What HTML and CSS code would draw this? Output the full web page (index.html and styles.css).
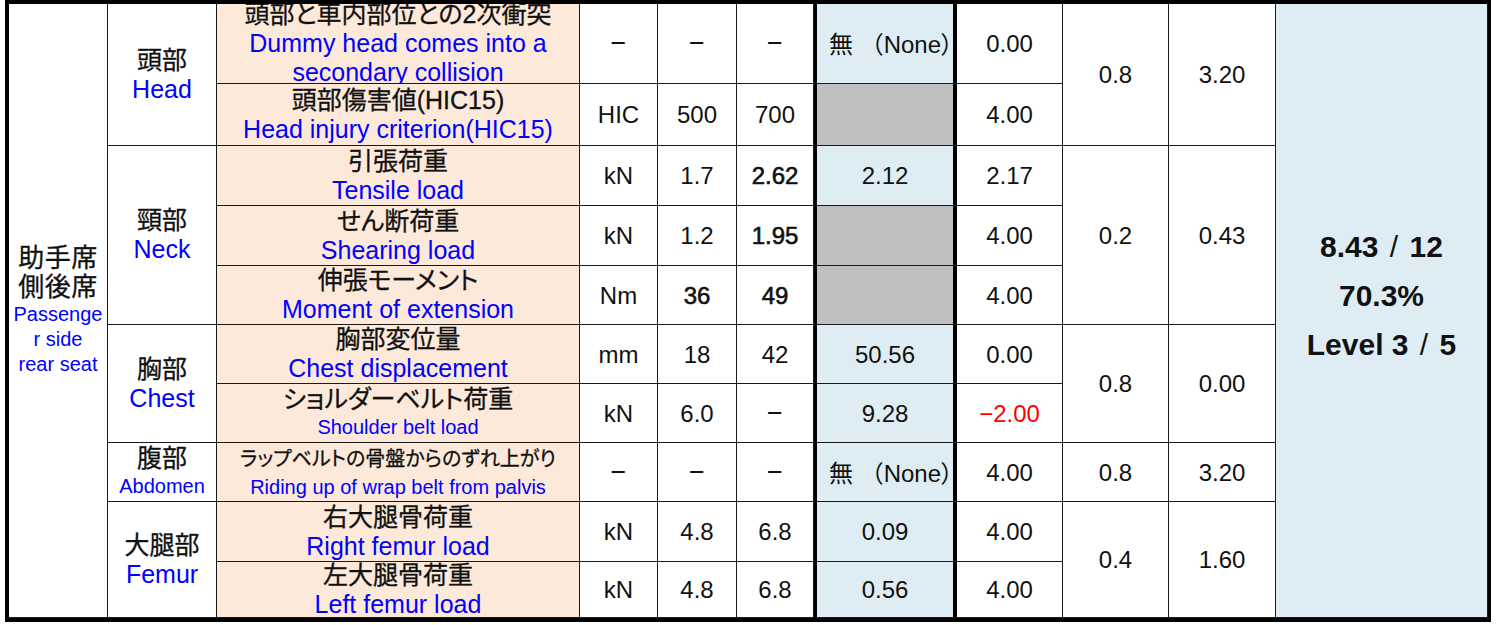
FILE: index.html
```html
<!DOCTYPE html>
<html lang="ja">
<head>
<meta charset="utf-8">
<title>Passenger side rear seat</title>
<link rel="stylesheet" href="styles.css">
</head>
<body>
<div class="sheet">
  <!-- row 1 -->
  <div class="cell seat">
    <span class="jp">助手席</span>
    <span class="jp">側後席</span>
    <span class="en sm">Passenge</span>
    <span class="en sm">r side</span>
    <span class="en sm">rear seat</span>
  </div>
  <div class="cell part r2"><span class="jp">頭部</span><span class="en">Head</span></div>
  <div class="cell item"><span class="jp">頭部と車内部位との2次衝突</span><span class="en">Dummy head comes into a</span><span class="en">secondary collision</span></div>
  <div class="cell dash">−</div>
  <div class="cell dash">−</div>
  <div class="cell dash">−</div>
  <div class="cell meas"><span class="none">無 <span class="po">（</span>None<span class="pc">）</span></span></div>
  <div class="cell">0.00</div>
  <div class="cell r2">0.8</div>
  <div class="cell r2">3.20</div>
  <div class="cell total">
    <span>8.43 <span class="slash">/</span> 12</span>
    <span>70.3%</span>
    <span>Level 3 <span class="slash">/</span> 5</span>
  </div>

  <!-- row 2 -->
  <div class="cell item"><span class="jp">頭部傷害値(HIC15)</span><span class="en">Head injury criterion(HIC15)</span></div>
  <div class="cell">HIC</div>
  <div class="cell">500</div>
  <div class="cell">700</div>
  <div class="cell meas gray"></div>
  <div class="cell">4.00</div>

  <!-- row 3 -->
  <div class="cell part r3"><span class="jp">頸部</span><span class="en">Neck</span></div>
  <div class="cell item"><span class="jp">引張荷重</span><span class="en">Tensile load</span></div>
  <div class="cell">kN</div>
  <div class="cell">1.7</div>
  <div class="cell b">2.62</div>
  <div class="cell meas">2.12</div>
  <div class="cell">2.17</div>
  <div class="cell r3">0.2</div>
  <div class="cell r3">0.43</div>

  <!-- row 4 -->
  <div class="cell item"><span class="jp">せん断荷重</span><span class="en">Shearing load</span></div>
  <div class="cell">kN</div>
  <div class="cell">1.2</div>
  <div class="cell b">1.95</div>
  <div class="cell meas gray"></div>
  <div class="cell">4.00</div>

  <!-- row 5 -->
  <div class="cell item"><span class="jp">伸張モーメント</span><span class="en">Moment of extension</span></div>
  <div class="cell">Nm</div>
  <div class="cell b">36</div>
  <div class="cell b">49</div>
  <div class="cell meas gray"></div>
  <div class="cell">4.00</div>

  <!-- row 6 -->
  <div class="cell part r2"><span class="jp">胸部</span><span class="en">Chest</span></div>
  <div class="cell item"><span class="jp">胸部変位量</span><span class="en">Chest displacement</span></div>
  <div class="cell">mm</div>
  <div class="cell">18</div>
  <div class="cell">42</div>
  <div class="cell meas">50.56</div>
  <div class="cell">0.00</div>
  <div class="cell r2">0.8</div>
  <div class="cell r2">0.00</div>

  <!-- row 7 -->
  <div class="cell item"><span class="jp">ショルダーベルト荷重</span><span class="en sm">Shoulder belt load</span></div>
  <div class="cell">kN</div>
  <div class="cell">6.0</div>
  <div class="cell dash">−</div>
  <div class="cell meas">9.28</div>
  <div class="cell neg">−2.00</div>

  <!-- row 8 -->
  <div class="cell part"><span class="jp">腹部</span><span class="en sm">Abdomen</span></div>
  <div class="cell item"><span class="jp sm">ラップベルトの骨盤からのずれ上がり</span><span class="en sm">Riding up of wrap belt from palvis</span></div>
  <div class="cell dash">−</div>
  <div class="cell dash">−</div>
  <div class="cell dash">−</div>
  <div class="cell meas"><span class="none">無 <span class="po">（</span>None<span class="pc">）</span></span></div>
  <div class="cell">4.00</div>
  <div class="cell">0.8</div>
  <div class="cell">3.20</div>

  <!-- row 9 -->
  <div class="cell part r2"><span class="jp">大腿部</span><span class="en">Femur</span></div>
  <div class="cell item"><span class="jp">右大腿骨荷重</span><span class="en">Right femur load</span></div>
  <div class="cell">kN</div>
  <div class="cell">4.8</div>
  <div class="cell">6.8</div>
  <div class="cell meas">0.09</div>
  <div class="cell">4.00</div>
  <div class="cell r2">0.4</div>
  <div class="cell r2">1.60</div>

  <!-- row 10 -->
  <div class="cell item"><span class="jp">左大腿骨荷重</span><span class="en">Left femur load</span></div>
  <div class="cell">kN</div>
  <div class="cell">4.8</div>
  <div class="cell">6.8</div>
  <div class="cell meas">0.56</div>
  <div class="cell">4.00</div>
</div>
</body>
</html>
```

FILE: styles.css
```css
html, body {
  margin: 0;
  padding: 0;
  background: #ffffff;
}

body {
  font-family: "Liberation Sans", "Noto Sans CJK JP", sans-serif;
  color: #000000;
}

.sheet {
  margin-left: 5px;
  width: 1479px;
  display: grid;
  grid-template-columns: 99px 109px 363px 78px 79px 77px 143px 106px 106px 107px 212px;
  grid-template-rows: 80px 62px 60px 60px 59px 59px 59px 59px 60px 56px;
  border-top: 4px solid #000;
  border-left: 4px solid #000;
  border-right: 3px solid #000;
  border-bottom: 4px solid #000;
}

.cell {
  display: flex;
  flex-direction: column;
  justify-content: center;
  align-items: center;
  text-align: center;
  border-right: 1px solid #1a1a1a;
  border-bottom: 1px solid #1a1a1a;
  overflow: hidden;
  font-size: 24px;
  line-height: 29px;
  white-space: nowrap;
  color: #111;
}

.r2 { grid-row: span 2; }
.r3 { grid-row: span 3; }

.seat {
  grid-row: span 10;
}

.seat .jp {
  font-size: 26px;
  line-height: 29px;
  letter-spacing: 0.5px;
}

.seat .sm {
  line-height: 25px;
}

.jp {
  display: block;
  font-size: 25px;
  line-height: 29px;
  font-feature-settings: "palt";
  -webkit-text-stroke: 0.3px #111;
}

.en {
  display: block;
  font-size: 25px;
  line-height: 29px;
  color: #0000ff;
}

.sm {
  font-size: 20px;
  line-height: 27px;
}

.jp.sm {
  font-size: 20px;
  line-height: 30px;
}

.item {
  background: #fce9da;
}

.meas {
  background: #deedf3;
  border-left: 3px solid #000;
  border-right: 4px solid #000;
}

.meas.gray {
  background: #bfbfbf;
}

.none {
  padding-left: 12px;
}

.po,
.pc {
  font-family: "Noto Sans CJK JP", sans-serif;
}

.pc {
  font-feature-settings: "palt";
}

.dash {
  font-size: 27px;
}

.b {
  -webkit-text-stroke: 0.6px #111;
}

.neg {
  color: #ff0000;
}

.total {
  grid-row: span 10;
  background: #deedf3;
  font-size: 30px;
  font-weight: bold;
  line-height: 49px;
  padding-bottom: 30px;
  box-sizing: border-box;
}

.total .slash {
  font-weight: normal;
  padding: 0 3px;
}
```
